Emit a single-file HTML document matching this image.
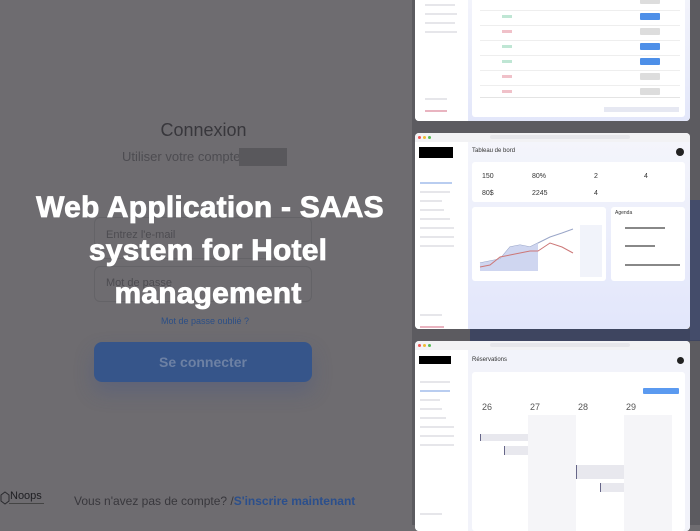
<!DOCTYPE html>
<html><head><meta charset="utf-8"><style>
*{margin:0;padding:0;box-sizing:border-box}
body{width:700px;height:525px;overflow:hidden;background:#6e6c70;font-family:"Liberation Sans",sans-serif;position:relative}
.a{position:absolute}
.win{position:absolute;left:415px;width:275px;background:#fff;border-radius:4px;overflow:hidden}
.side{position:absolute;left:0;top:0;bottom:0;width:53px;background:#fff}
.main{position:absolute;left:53px;right:0;top:0;bottom:0;background:linear-gradient(#f3f4fb,#e3e7fa)}
.card{position:absolute;background:#fff;border-radius:3px}
.ln{position:absolute;height:2px;background:#d6d8e0}
.btn{position:absolute;width:20px;height:7px;border-radius:1px}
.title{position:absolute;left:0;width:420px;text-align:center;color:#fff;font-weight:bold;font-size:30px;letter-spacing:0.2px;-webkit-text-stroke:0.8px #fff}
</style></head><body>
<div class="a" style="left:412px;top:0;width:288px;height:525px;background:#5c5b60"></div>
<div class="a" style="left:470px;top:329px;width:230px;height:12px;background:#3e4560"></div>
<div class="a" style="left:690px;top:200px;width:10px;height:140px;background:#444c6a"></div>

<!-- window 1 -->
<div class="win" style="top:-4px;height:125px">
 <div class="side">
  <div class="ln" style="left:10px;top:8px;width:30px;background:#e6e6ea"></div>
  <div class="ln" style="left:10px;top:17px;width:32px;background:#e6e6ea"></div>
  <div class="ln" style="left:10px;top:26px;width:30px;background:#e6e6ea"></div>
  <div class="ln" style="left:10px;top:35px;width:32px;background:#e6e6ea"></div>
  <div class="ln" style="left:10px;top:102px;width:22px;background:#e6e6ea"></div>
  <div class="ln" style="left:10px;top:114px;width:22px;background:#e9b4c0"></div>
 </div>
 <div class="main">
  <div class="card" style="left:4px;top:0;right:5px;bottom:4px">
   <div class="a" style="left:8px;top:14px;width:200px;height:1px;background:#eee"></div>
   <div class="a" style="left:8px;top:29px;width:200px;height:1px;background:#eee"></div>
   <div class="a" style="left:8px;top:44px;width:200px;height:1px;background:#eee"></div>
   <div class="a" style="left:8px;top:59px;width:200px;height:1px;background:#eee"></div>
   <div class="a" style="left:8px;top:74px;width:200px;height:1px;background:#eee"></div>
   <div class="a" style="left:8px;top:89px;width:200px;height:1px;background:#eee"></div>
   <div class="a" style="left:8px;top:101px;width:200px;height:1px;background:#e4e4e4"></div>
   <div class="btn" style="left:168px;top:1px;background:#ddd"></div>
   <div class="btn" style="left:168px;top:17px;background:#4d8fe8"></div>
   <div class="btn" style="left:168px;top:32px;background:#ddd"></div>
   <div class="btn" style="left:168px;top:47px;background:#4d8fe8"></div>
   <div class="btn" style="left:168px;top:62px;background:#4d8fe8"></div>
   <div class="btn" style="left:168px;top:77px;background:#ddd"></div>
   <div class="btn" style="left:168px;top:92px;background:#ddd"></div>
   <div class="a" style="left:30px;top:19px;width:10px;height:3px;background:#bfe6d4"></div>
   <div class="a" style="left:30px;top:34px;width:10px;height:3px;background:#f0c1c9"></div>
   <div class="a" style="left:30px;top:49px;width:10px;height:3px;background:#bfe6d4"></div>
   <div class="a" style="left:30px;top:64px;width:10px;height:3px;background:#bfe6d4"></div>
   <div class="a" style="left:30px;top:79px;width:10px;height:3px;background:#f0c1c9"></div>
   <div class="a" style="left:30px;top:94px;width:10px;height:3px;background:#f0c1c9"></div>
   <div class="a" style="left:132px;top:111px;width:75px;height:5px;background:#e6e8f2"></div>
  </div>
 </div>
</div>

<!-- window 2 -->
<div class="win" style="top:133px;height:196px">
 <div class="a" style="left:0;top:0;width:275px;height:9px;background:#f2f2f4"></div>
 <div class="a" style="left:3px;top:3px;width:3px;height:3px;border-radius:50%;background:#e55"></div>
 <div class="a" style="left:8px;top:3px;width:3px;height:3px;border-radius:50%;background:#eb3"></div>
 <div class="a" style="left:13px;top:3px;width:3px;height:3px;border-radius:50%;background:#5b5"></div>
 <div class="a" style="left:75px;top:2px;width:140px;height:4px;background:#e6e6ea;border-radius:2px"></div>
 <div class="a" style="left:0;top:9px;width:53px;bottom:0;background:#fff">
  <div class="a" style="left:4px;top:5px;width:34px;height:11px;background:#000"></div>
  <div class="ln" style="left:5px;top:40px;width:32px;background:#b9cdf0"></div>
  <div class="ln" style="left:5px;top:49px;width:30px;background:#e6e6ea"></div>
  <div class="ln" style="left:5px;top:58px;width:22px;background:#e6e6ea"></div>
  <div class="ln" style="left:5px;top:67px;width:24px;background:#e6e6ea"></div>
  <div class="ln" style="left:5px;top:76px;width:30px;background:#e6e6ea"></div>
  <div class="ln" style="left:5px;top:85px;width:34px;background:#e6e6ea"></div>
  <div class="ln" style="left:5px;top:94px;width:34px;background:#e6e6ea"></div>
  <div class="ln" style="left:5px;top:103px;width:34px;background:#e6e6ea"></div>
  <div class="ln" style="left:5px;top:172px;width:22px;background:#e6e6ea"></div>
  <div class="ln" style="left:5px;top:184px;width:24px;background:#e9b4c0"></div>
 </div>
 <div class="a" style="left:53px;top:9px;right:0;bottom:0;background:linear-gradient(#f4f5fb,#e2e6fb)">
  <div class="a" style="left:4px;top:6px;font-size:6px;color:#333">Tableau de bord</div>
  <div class="a" style="right:6px;top:6px;width:8px;height:8px;border-radius:50%;background:#222"></div>
  <div class="card" style="left:4px;top:20px;right:5px;height:40px">
   <div class="a" style="left:10px;top:11px;font-size:7px;color:#333">150</div>
   <div class="a" style="left:60px;top:11px;font-size:7px;color:#333">80%</div>
   <div class="a" style="left:122px;top:11px;font-size:7px;color:#333">2</div>
   <div class="a" style="left:172px;top:11px;font-size:7px;color:#333">4</div>
   <div class="a" style="left:10px;top:28px;font-size:7px;color:#333">80$</div>
   <div class="a" style="left:60px;top:28px;font-size:7px;color:#333">2245</div>
   <div class="a" style="left:122px;top:28px;font-size:7px;color:#333">4</div>
  </div>
  <div class="card" style="left:4px;top:65px;width:134px;height:74px">
   <svg class="a" style="left:6px;top:18px" width="100" height="52"><path d="M2 38 L12 36 L22 34 L32 22 L42 20 L52 22 L60 18 L72 12 L84 8 L95 4" stroke="#9aa6c8" fill="none"/><path d="M2 38 L12 36 L22 34 L32 22 L42 20 L52 22 L60 18 L60 46 L2 46Z" fill="#cfd6f0"/><path d="M2 42 L12 40 L22 32 L32 30 L42 28 L52 26 L60 26 L72 18 L84 22 L95 28" stroke="#c77" fill="none"/></svg>
   <div class="a" style="left:108px;top:18px;width:22px;height:52px;background:#f1f3fa"></div>
  </div>
  <div class="card" style="left:143px;top:65px;right:5px;height:74px">
   <div class="a" style="left:4px;top:3px;font-size:5px;color:#333">Agenda</div>
   <div class="ln" style="left:14px;top:20px;width:40px;background:#888"></div>
   <div class="ln" style="left:14px;top:38px;width:30px;background:#888"></div>
   <div class="ln" style="left:14px;top:57px;width:55px;background:#888"></div>
  </div>
 </div>
</div>

<!-- window 3 -->
<div class="win" style="top:341px;height:190px">
 <div class="a" style="left:0;top:0;width:275px;height:9px;background:#f2f2f4"></div>
 <div class="a" style="left:3px;top:3px;width:3px;height:3px;border-radius:50%;background:#e55"></div>
 <div class="a" style="left:8px;top:3px;width:3px;height:3px;border-radius:50%;background:#eb3"></div>
 <div class="a" style="left:13px;top:3px;width:3px;height:3px;border-radius:50%;background:#5b5"></div>
 <div class="a" style="left:75px;top:2px;width:140px;height:4px;background:#e6e6ea;border-radius:2px"></div>
 <div class="a" style="left:0;top:9px;width:53px;bottom:0;background:#fff">
  <div class="a" style="left:4px;top:6px;width:32px;height:8px;background:#000"></div>
  <div class="ln" style="left:5px;top:31px;width:30px;background:#e6e6ea"></div>
  <div class="ln" style="left:5px;top:40px;width:30px;background:#b9cdf0"></div>
  <div class="ln" style="left:5px;top:49px;width:20px;background:#e6e6ea"></div>
  <div class="ln" style="left:5px;top:58px;width:22px;background:#e6e6ea"></div>
  <div class="ln" style="left:5px;top:67px;width:26px;background:#e6e6ea"></div>
  <div class="ln" style="left:5px;top:76px;width:34px;background:#e6e6ea"></div>
  <div class="ln" style="left:5px;top:85px;width:34px;background:#e6e6ea"></div>
  <div class="ln" style="left:5px;top:94px;width:34px;background:#e6e6ea"></div>
  <div class="ln" style="left:5px;top:163px;width:22px;background:#e6e6ea"></div>
 </div>
 <div class="a" style="left:53px;top:9px;right:0;bottom:0;background:#f2f3fa">
  <div class="a" style="left:4px;top:7px;font-size:6px;color:#333">Réservations</div>
  <div class="a" style="right:6px;top:7px;width:7px;height:7px;border-radius:50%;background:#222"></div>
  <div class="card" style="left:4px;top:22px;right:5px;bottom:0">
   <div class="a" style="right:6px;top:16px;width:36px;height:6px;background:#5b9af0;border-radius:1px"></div>
   <div class="a" style="left:10px;top:30px;font-size:9px;color:#555">26</div>
   <div class="a" style="left:58px;top:30px;font-size:9px;color:#555">27</div>
   <div class="a" style="left:106px;top:30px;font-size:9px;color:#555">28</div>
   <div class="a" style="left:154px;top:30px;font-size:9px;color:#555">29</div>
   <div class="a" style="left:56px;top:43px;width:48px;height:120px;background:#f5f5f8"></div>
   <div class="a" style="left:152px;top:43px;width:48px;height:120px;background:#f5f5f8"></div>
   <div class="a" style="left:8px;top:62px;width:48px;height:7px;background:#e8e8ee;border-left:1px solid #668"></div>
   <div class="a" style="left:32px;top:74px;width:24px;height:9px;background:#e8e8ee;border-left:1px solid #668"></div>
   <div class="a" style="left:104px;top:93px;width:48px;height:14px;background:#e8e8ee;border-left:1px solid #668"></div>
   <div class="a" style="left:128px;top:111px;width:24px;height:9px;background:#e8e8ee;border-left:1px solid #668"></div>
  </div>
 </div>
</div>

<!-- login -->
<div class="a" style="left:0;top:120px;width:407px;text-align:center;font-size:18px;color:#38373c">Connexion</div>
<div class="a" style="left:122px;top:149px;font-size:13px;color:#4d4c51">Utiliser votre compte</div>
<div class="a" style="left:239px;top:148px;width:48px;height:18px;background:#59585c"></div>
<div class="a" style="left:94px;top:217px;width:218px;height:42px;border:1px solid #646367;border-radius:6px"></div>
<div class="a" style="left:106px;top:229px;font-size:11px;color:#4d4c51">Entrez l'e-mail</div>
<div class="a" style="left:94px;top:266px;width:218px;height:36px;border:1px solid #646367;border-radius:6px"></div>
<div class="a" style="left:106px;top:277px;font-size:11px;color:#4d4c51">Mot de passe</div>
<div class="a" style="left:0;top:316px;width:410px;text-align:center;font-size:9px;color:#2c4f86">Mot de passe oublié ?</div>
<div class="a" style="left:94px;top:342px;width:218px;height:40px;background:#36558a;border-radius:8px;box-shadow:0 10px 20px rgba(60,80,140,.3);text-align:center;line-height:40px;color:#6d81a4;font-weight:bold;font-size:14px">Se connecter</div>

<div class="title" style="top:191px">Web Application - SAAS</div>
<div class="title" style="top:234px;left:-2px">system for Hotel</div>
<div class="title" style="top:277px;left:-2px">management</div>

<svg class="a" style="left:0;top:491px" width="10" height="14"><path d="M5 1 L9 4 L9 10 L5 13 L1 10 L1 4Z" fill="none" stroke="#2a2a2e" stroke-width="1"/></svg>
<div class="a" style="left:10px;top:490px;font-size:11px;color:#1e1e22">Noops</div>
<div class="a" style="left:9px;top:503px;width:35px;height:1px;background:#444"></div>
<div class="a" style="left:74px;top:494px;font-size:12px;color:#38373c;white-space:nowrap">Vous n'avez pas de compte? /<b style="color:#2b4f8c">S'inscrire maintenant</b></div>
</body></html>
